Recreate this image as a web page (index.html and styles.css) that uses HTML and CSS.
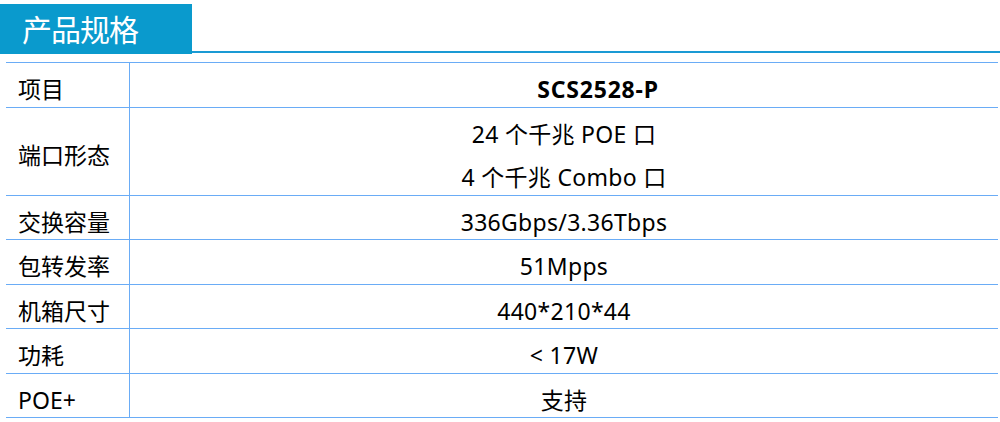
FILE: index.html
```html
<!DOCTYPE html>
<html lang="zh-CN">
<head>
    <meta charset="UTF-8">
    <meta name="viewport" content="width=device-width, initial-scale=1.0">
    <title>产品规格</title>
    <link rel="stylesheet" href="styles.css">
</head>
<body>
    <div class="spec">
        <!-- Title tab -->
        <div class="spec-head">
            <h2 class="spec-title">产品规格</h2>
            <div class="spec-rule"></div>
        </div>

        <!-- Spec table -->
        <table class="spec-table">
            <tr>
                <td class="label">项目</td>
                <td class="value model">SCS2528-P</td>
            </tr>
            <tr>
                <td class="label">端口形态</td>
                <td class="value">
                    <div class="line">24 个千兆 POE 口</div>
                    <div class="line">4 个千兆 Combo 口</div>
                </td>
            </tr>
            <tr>
                <td class="label">交换容量</td>
                <td class="value">336Gbps/3.36Tbps</td>
            </tr>
            <tr>
                <td class="label">包转发率</td>
                <td class="value">51Mpps</td>
            </tr>
            <tr>
                <td class="label">机箱尺寸</td>
                <td class="value">440*210*44</td>
            </tr>
            <tr>
                <td class="label">功耗</td>
                <td class="value">&lt; 17W</td>
            </tr>
            <tr>
                <td class="label">POE+</td>
                <td class="value">支持</td>
            </tr>
        </table>
    </div>
</body>
</html>
```

FILE: styles.css
```css
body {
    margin: 0;
    width: 1000px;
    height: 422px;
    overflow: hidden;
    background: #ffffff;
    color: #000;
    font-family: "Noto Sans", "Noto Sans CJK SC", sans-serif;
}

.spec-head {
    display: flex;
    align-items: flex-start;
    padding-top: 4px;
}

.spec-title {
    width: 192px;
    height: 50px;
    margin: 0;
    padding: 1px 0 0 22px;
    box-sizing: border-box;
    background: #0a9acd;
    color: #ffffff;
    font-size: 30px;
    font-weight: 400;
    line-height: 50px;
    letter-spacing: -1px;
}

.spec-rule {
    flex: 1;
    height: 47px;
    border-bottom: 2px solid #1a9ad4;
}

.spec-table {
    width: 992px;
    margin: 8px 0 0 6px;
    border-collapse: collapse;
    font-size: 23px;
}

.spec-table td {
    border-top: 1px solid #6aacf6;
    border-bottom: 1px solid #6aacf6;
    padding: 10px 0 0;
    line-height: 33.5px;
    vertical-align: middle;
}

.spec-table .label {
    width: 111px;
    padding-left: 12px;
    border-right: 1px solid #6aacf6;
}

.spec-table .value {
    text-align: center;
    letter-spacing: 0.3px;
}

.spec-table .model {
    padding-left: 68px;
    font-weight: 700;
    letter-spacing: 0.8px;
}

.spec-table .line + .line {
    margin-top: 10px;
}
```
